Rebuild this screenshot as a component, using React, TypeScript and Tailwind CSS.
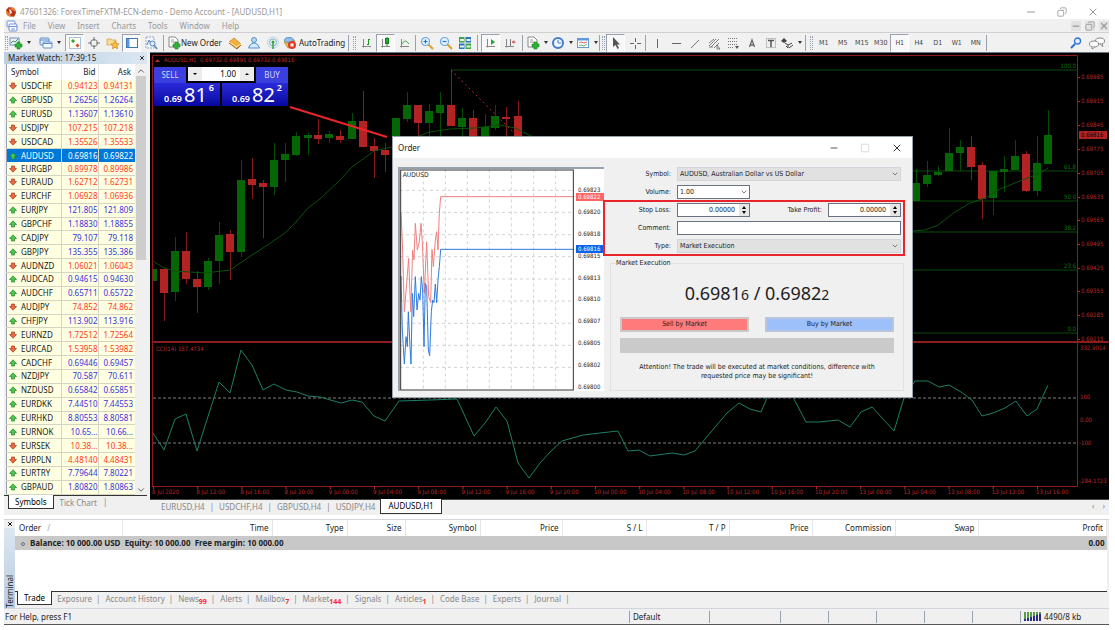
import { useState } from 'react'
import type { ReactNode } from 'react'
import { ChevronDown, ChevronUp, Copy, Minus, Square, X } from 'lucide-react'

type Quote = [symbol: string, bid: string, ask: string, up: boolean]

const quotes: Quote[] = [
    ['USDCHF', '0.94123', '0.94131', false],
    ['GBPUSD', '1.26256', '1.26264', true],
    ['EURUSD', '1.13607', '1.13610', true],
    ['USDJPY', '107.215', '107.218', false],
    ['USDCAD', '1.35526', '1.35533', false],
    ['AUDUSD', '0.69816', '0.69822', true],
    ['EURGBP', '0.89978', '0.89986', false],
    ['EURAUD', '1.62712', '1.62731', false],
    ['EURCHF', '1.06928', '1.06936', false],
    ['EURJPY', '121.805', '121.809', true],
    ['GBPCHF', '1.18830', '1.18855', true],
    ['CADJPY', '79.107', '79.118', true],
    ['GBPJPY', '135.355', '135.386', true],
    ['AUDNZD', '1.06021', '1.06043', false],
    ['AUDCAD', '0.94615', '0.94630', true],
    ['AUDCHF', '0.65711', '0.65722', true],
    ['AUDJPY', '74.852', '74.862', false],
    ['CHFJPY', '113.902', '113.916', true],
    ['EURNZD', '1.72512', '1.72564', false],
    ['EURCAD', '1.53958', '1.53982', false],
    ['CADCHF', '0.69446', '0.69457', true],
    ['NZDJPY', '70.587', '70.611', true],
    ['NZDUSD', '0.65842', '0.65851', true],
    ['EURDKK', '7.44510', '7.44553', true],
    ['EURHKD', '8.80553', '8.80581', true],
    ['EURNOK', '10.65...', '10.66...', true],
    ['EURSEK', '10.38...', '10.38...', false],
    ['EURPLN', '4.48140', '4.48431', false],
    ['EURTRY', '7.79644', '7.80221', true],
    ['GBPAUD', '1.80820', '1.80863', true],
]

// x, body top, body bottom, wick top, wick bottom, bullish
type Candle = [number, number, number, number, number, boolean]

const candles: Candle[] = [
    [153, 269, 281, 269, 281, true],
    [164, 269, 293, 269, 321, false],
    [175, 251, 292, 237, 301, true],
    [186, 251, 279, 232, 284, false],
    [197, 279, 287, 271, 313, false],
    [208, 261, 287, 258, 290, true],
    [219, 235, 261, 222, 284, true],
    [230, 234, 252, 230, 280, false],
    [241, 180, 252, 160, 257, true],
    [252, 179, 185, 158, 199, false],
    [263, 183, 187, 180, 238, false],
    [274, 160, 187, 143, 195, true],
    [285, 154, 160, 143, 182, true],
    [296, 136, 155, 132, 156, true],
    [308, 135, 138, 133, 155, true],
    [318, 135, 139, 119, 144, false],
    [329, 134, 138, 131, 143, true],
    [340, 136, 140, 130, 143, false],
    [352, 121, 139, 113, 139, true],
    [363, 121, 147, 91, 147, false],
    [374, 146, 151, 138, 178, false],
    [385, 150, 155, 143, 172, false],
    [396, 118, 140, 118, 140, true],
    [407, 105, 119, 92, 122, true],
    [418, 105, 123, 105, 140, false],
    [429, 111, 123, 104, 140, true],
    [440, 105, 113, 92, 140, true],
    [451, 105, 126, 70, 126, false],
    [462, 118, 127, 108, 140, true],
    [473, 118, 140, 110, 140, false],
    [485, 127, 140, 114, 140, true],
    [495, 116, 128, 105, 130, true],
    [506, 117, 119, 107, 140, false],
    [518, 116, 140, 101, 140, false],
    [916, 183, 201, 169, 201, true],
    [927, 175, 184, 161, 187, true],
    [938, 172, 175, 166, 176, true],
    [949, 153, 171, 128, 171, true],
    [960, 147, 153, 140, 171, true],
    [971, 147, 167, 136, 180, false],
    [982, 165, 199, 162, 219, false],
    [993, 171, 198, 171, 215, true],
    [1004, 169, 172, 156, 192, true],
    [1015, 156, 170, 140, 170, true],
    [1026, 154, 191, 151, 192, false],
    [1037, 163, 191, 136, 196, true],
    [1048, 135, 164, 110, 164, true],
]

const fibLevels: [string, number][] = [
    ['100.0', 70],
    ['61.8', 171],
    ['50.0', 201],
    ['38.2', 232],
    ['23.6', 270],
    ['0.0', 333],
]

const priceScale: [string, number][] = [
    ['0.69985', 77],
    ['0.69915', 101],
    ['0.69845', 125],
    ['0.69775', 149],
    ['0.69705', 173],
    ['0.69635', 197],
    ['0.69565', 220],
    ['0.69495', 244],
    ['0.69425', 268],
    ['0.69355', 291],
    ['0.69285', 315],
    ['0.69215', 339],
]

const dates = [
    '8 Jul 2020', '8 Jul 12:00', '8 Jul 16:00', '8 Jul 20:00', '9 Jul 00:00', '9 Jul 04:00', '9 Jul 08:00',
    '9 Jul 12:00', '9 Jul 16:00', '9 Jul 20:00', '10 Jul 00:00', '10 Jul 04:00', '10 Jul 08:00', '10 Jul 12:00',
    '10 Jul 16:00', '10 Jul 20:00', '13 Jul 00:00', '13 Jul 04:00', '13 Jul 08:00', '13 Jul 12:00', '13 Jul 16:00',
]

const cci =
    '153,433 164,450 175,419 186,414 197,451 219,382 230,393 241,350 252,365 263,390 274,384 286,390 297,392 308,396 320,397 341,403 352,400 362,402 374,416 385,421 399,401 430,400 457,399 474,436 485,423 496,407 507,421 518,463 529,478 540,463 551,451 562,441 583,435 600,433 618,431 628,451 639,450 650,456 672,453 684,455 695,451 727,413 739,403 750,409 761,412 767,398 772,380 789,380 794,399 806,422 819,422 838,420 850,427 861,412 872,407 894,431 904,398 915,381 928,381 939,387 949,385 961,392 972,400 982,416 993,413 1005,408 1016,401 1027,416 1037,409 1048,385'

const movingAverage =
    '153,261 164,268 175,271 205,273 230,270 252,255 263,248 285,233 296,222 308,208 320,199 340,180 352,167 374,151 391,147 416,137 430,132 450,129 475,128 500,125 515,128 533,137 700,240 870,234 913,231 925,230 938,225 955,212 970,203 985,198 1000,189 1020,181 1040,173 1048,168'

const menus = ['File', 'View', 'Insert', 'Charts', 'Tools', 'Window', 'Help']
const timeframes = ['M1', 'M5', 'M15', 'M30', 'H1', 'H4', 'D1', 'W1', 'MN']
const chartTabs = ['EURUSD,H4', 'USDCHF,H4', 'GBPUSD,H4', 'USDJPY,H4', 'AUDUSD,H1']
const tickScale = ['0.69823', '0.69820', '0.69818', '0.69815', '0.69813', '0.69810', '0.69807', '0.69805', '0.69802', '0.69800']

const terminalTabs: [string, string?][] = [
    ['Trade'],
    ['Exposure'],
    ['Account History'],
    ['News', '99'],
    ['Alerts'],
    ['Mailbox', '7'],
    ['Market', '144'],
    ['Signals'],
    ['Articles', '1'],
    ['Code Base'],
    ['Experts'],
    ['Journal'],
]

/* ---------- toolbar ---------- */

function Glyph({ children }: { children: ReactNode }) {
    return (
        <svg viewBox="0 0 14 14" className="h-3.5 w-3.5 shrink-0" fill="none" strokeWidth="1">
            {children}
        </svg>
    )
}

const plus = <path d="M8 6h3v2h2v3h-2v2H8v-2H6V8h2z" fill="#2eb135" stroke="#17861f" strokeWidth=".6" />
const axes = <path d="M3.5 3v8.500M2 10.500h9" stroke="#888" />

const icons = {
    newChart: (
        <>
            <rect x="1" y="2" width="9" height="7" fill="#eaf4ff" stroke="#7390b5" />
            <path d="M2 7l2-2 2 1 3-3" stroke="#3c9c43" />
            {plus}
        </>
    ),
    profiles: (
        <>
            <rect x="1" y="2" width="9" height="7" rx="1" fill="#dbeafb" stroke="#5f8fc7" />
            <path d="M1 4h9" stroke="#5f8fc7" />
            <rect x="4" y="6" width="9" height="6" rx="1" fill="#f5faff" stroke="#5f8fc7" />
            <path d="M4 7.500h9" stroke="#5f8fc7" />
        </>
    ),
    watch: (
        <>
            <rect x="1.500" y="1.500" width="11" height="11" fill="#fffdf2" stroke="#a9c1e0" />
            <path d="M5 3l2 2-2 2-2-2z" fill="#2ba135" />
            <path d="M9.500 7.500l2 2-2 2-2-2z" fill="#d8492b" />
        </>
    ),
    target: (
        <>
            <circle cx="7" cy="7" r="3.500" stroke="#777" />
            <path d="M7 1v4M7 9v4M1 7h4M9 7h4" stroke="#777" />
        </>
    ),
    navigator: (
        <>
            <path d="M1 3h4l1 1h4v5H1z" fill="#f9dd94" stroke="#d3a552" strokeWidth=".8" />
            <path d="M9 5l1.200 2.600 2.800.3-2 2 .5 2.800L9 11.300l-2.500 1.400.5-2.800-2-2 2.800-.3z" fill="#fbbf3d" stroke="#c97f19" strokeWidth=".7" />
        </>
    ),
    panel: (
        <>
            <rect x="1.500" y="2.500" width="11" height="9" fill="#fff" stroke="#3f78b8" />
            <rect x="2" y="3" width="2.500" height="8" fill="#5b9ade" />
        </>
    ),
    tester: (
        <>
            <rect x="2" y="1" width="8" height="11" fill="#f3f8ff" stroke="#91a9c6" strokeDasharray="2 1" />
            <path d="M3 9l2-5 2 4 1-2" stroke="#557fb0" />
            <circle cx="8.500" cy="7.500" r="2.500" fill="#dcecff" stroke="#5b83b5" />
            <path d="M10 9l3 4" stroke="#5b83b5" strokeWidth="1.500" />
        </>
    ),
    order: (
        <>
            <path d="M2 1h6l3 3v7H2z" fill="#fff" stroke="#888" />
            <path d="M4 4h3M4 6h4" stroke="#999" />
            {plus}
        </>
    ),
    editor: (
        <>
            <path d="M1 6l5-4 7 6-4 4z" fill="#f3b13c" stroke="#c98528" strokeWidth=".8" />
            <path d="M1 6l7.500 5L13 8" stroke="#fff0b8" />
            <path d="M1 7l8 6 4-4" stroke="#a8641a" />
        </>
    ),
    account: (
        <>
            <circle cx="7" cy="4" r="2.500" fill="#b9daf7" stroke="#4f8fce" />
            <path d="M3 9q4-4 8 0l1.500 3h-11z" fill="#d5e9fb" stroke="#4f8fce" />
        </>
    ),
    signal: (
        <>
            <circle cx="7" cy="6.500" r="5.500" stroke="#b8d3e3" />
            <circle cx="7" cy="6.500" r="3.500" stroke="#7fb1cc" />
            <circle cx="7" cy="6" r="1.500" fill="#31a33d" />
            <path d="M7 7v6" stroke="#31a33d" strokeWidth="1.500" />
        </>
    ),
    auto: (
        <>
            <path d="M1 6l5-4 6 3-2 6-5 1z" fill="#f2b94b" stroke="#b98629" strokeWidth=".8" />
            <ellipse cx="6" cy="4" rx="4.500" ry="2.500" fill="#8fc0ea" stroke="#4a86ba" strokeWidth=".8" />
            <circle cx="9" cy="9" r="4" fill="#dc3a26" />
            <rect x="7.500" y="7.500" width="3" height="3" fill="#fff" />
        </>
    ),
    bars: (
        <>
            {axes}
            <path d="M8.500 3v6M7 8.500h1.500M10 3.500H8.500" stroke="#1e9428" />
        </>
    ),
    candle: (
        <>
            {axes}
            <path d="M8 1v9" stroke="#14811e" />
            <rect x="6.500" y="2.500" width="3" height="5" fill="#25a832" stroke="#14811e" />
        </>
    ),
    line: (
        <>
            {axes}
            <path d="M4 8q3-6 7 0" stroke="#4aa953" />
        </>
    ),
    zoomIn: (
        <>
            <path d="M8 8l5 5" stroke="#dfa32d" strokeWidth="2.200" />
            <circle cx="5.500" cy="5.500" r="4" fill="#e8f4ff" stroke="#6aa6e0" strokeWidth="1.200" />
            <path d="M3.500 5.500h4M5.500 3.500v4" stroke="#2375c9" strokeWidth="1.200" />
        </>
    ),
    zoomOut: (
        <>
            <path d="M8 8l5 5" stroke="#dfa32d" strokeWidth="2.200" />
            <circle cx="5.500" cy="5.500" r="4" fill="#e8f4ff" stroke="#6aa6e0" strokeWidth="1.200" />
            <path d="M3.500 5.500h4" stroke="#2375c9" strokeWidth="1.200" />
        </>
    ),
    tile: (
        <>
            <rect x="1" y="1" width="5.500" height="5.500" fill="#3aa544" />
            <rect x="7.500" y="1" width="5.500" height="5.500" fill="#2f72c4" />
            <rect x="1" y="7.500" width="5.500" height="5.500" fill="#2f72c4" />
            <rect x="7.500" y="7.500" width="5.500" height="5.500" fill="#3aa544" />
            <path d="M2 4h4M8.500 4h4M2 10.500h4M8.500 10.500h4" stroke="#e2f3e4" strokeWidth="2" />
        </>
    ),
    scroll: (
        <>
            {axes}
            <path d="M7 3v6l4-3z" fill="#27a332" />
        </>
    ),
    shift: (
        <>
            {axes}
            <path d="M7.500 3v7" stroke="#777" />
            <path d="M12.500 6H9.500M11 4.500L9.500 6 11 7.500" stroke="#cc3524" />
        </>
    ),
    clock: (
        <>
            <circle cx="7" cy="7" r="5" fill="#f1f7ff" stroke="#3f7ccc" strokeWidth="2" />
            <path d="M7 4v3h3" stroke="#3f7ccc" />
        </>
    ),
    template: (
        <>
            <rect x="1.500" y="2.500" width="11" height="9" fill="#fff" stroke="#6d97c6" />
            <path d="M1 3.500h12" stroke="#5b9ade" strokeWidth="2" />
            <path d="M3 7l2-1 3 1 3-1" stroke="#c44" strokeWidth=".8" />
            <path d="M3 10l2-1 3 1 3-2" stroke="#3a9a44" strokeWidth=".8" />
        </>
    ),
    cursor: <path d="M4 1v10l2.500-2 2 4 1.500-1-2-3.500H11z" fill="#555" />,
    cross: <path d="M7.500 2v4M7.500 9v4M2 7.500h4M9 7.500h4" stroke="#666" />,
    vline: <path d="M7.500 3v9" stroke="#666" />,
    hline: <path d="M3 7.500h9" stroke="#666" />,
    trend: <path d="M3 12l8-8" stroke="#777" />,
    channel: <path d="M2 10l7-7M4 11l8-8M2 7l5-4M7 12l5-5M2 11h4M10 9l3 4h-3z" stroke="#666" strokeWidth=".8" />,
    fibo: (
        <>
            <path d="M2 2.500h10M2 5.500h10M2 8.500h10M2 11.500h6" stroke="#777" strokeDasharray="1 1" />
            <path d="M9 10h4l-2 3z" fill="#555" />
        </>
    ),
    text: <path d="M4.500 11L7 4l2.500 7M5.500 9h3" stroke="#666" strokeWidth="1.300" />,
    label: (
        <>
            <rect x="2.500" y="2.500" width="9" height="9" stroke="#888" strokeDasharray="1 1" />
            <path d="M4 4.500h6M7 4.500V11" stroke="#555" strokeWidth="1.500" />
        </>
    ),
    arrows: (
        <>
            <path d="M1 5l3-3 3 3-3 2z" fill="#444" />
            <path d="M5 7l3 2 4-2M8 9v3l-2-2M9 12l4-3" stroke="#444" />
        </>
    ),
}

type IconName = keyof typeof icons

function Tool({ icon, label, pressed, menu, children }: { icon: IconName; label: string; pressed?: boolean; menu?: boolean; children?: ReactNode }) {
    return (
        <button
            type="button"
            title={label}
            aria-label={label}
            className={`flex h-[18px] min-w-[19px] items-center justify-center text-[#222] ${
                pressed ? 'border border-r-white border-b-white border-l-gray-400 border-t-gray-400 bg-[#f8f8f8]' : ''
            }`}
        >
            <Glyph>{icons[icon]}</Glyph>
            {children}
            {menu && <span className="ml-1 border-x-2 border-t-3 border-x-transparent border-t-[#333]" />}
        </button>
    )
}

function Grip() {
    return <span className="mx-px h-3.5 w-[3px] border-x border-dotted border-gray-400" />
}

function Sep({ tight }: { tight?: boolean }) {
    return <span className={`h-4 w-px bg-gray-400 ${tight ? 'mx-px' : 'mx-[3px]'}`} />
}

function Toolbar() {
    const [frame, setFrame] = useState('H1')

    return (
        <div className="flex h-5 items-center overflow-hidden border-t border-[#d0d0d0] bg-[#f1f1f1]">
            <Grip />
            <div className="flex items-center gap-2 pr-1">
                <Tool icon="newChart" label="New chart" menu />
                <Tool icon="profiles" label="Profiles" menu />
            </div>
            <Tool icon="watch" label="Market Watch" pressed />
            <Tool icon="target" label="Data Window" />
            <Tool icon="navigator" label="Navigator" />
            <Tool icon="panel" label="Terminal" pressed />
            <Tool icon="tester" label="Strategy Tester" />
            <Sep />
            <Tool icon="order" label="New order">
                New Order
            </Tool>
            <div className="flex items-center pl-1">
                <Tool icon="editor" label="MetaEditor" />
                <Tool icon="account" label="Account" />
                <Tool icon="signal" label="Signals" />
                <Tool icon="auto" label="Auto trading">
                    <span className="pl-0.5">AutoTrading</span>
                </Tool>
            </div>
            <Sep />
            <Grip />
            <Tool icon="bars" label="Bar chart" />
            <Tool icon="candle" label="Candlesticks" pressed />
            <Tool icon="line" label="Line chart" />
            <Sep tight />
            <Tool icon="zoomIn" label="Zoom in" />
            <Tool icon="zoomOut" label="Zoom out" />
            <Tool icon="tile" label="Tile windows" />
            <Sep />
            <Tool icon="scroll" label="Auto scroll" pressed />
            <Tool icon="shift" label="Chart shift" />
            <Sep />
            <div className="flex items-center gap-[3px]">
                <Tool icon="order" label="Indicators" menu />
                <Tool icon="clock" label="Periods" menu />
                <Tool icon="template" label="Templates" menu />
            </div>
            <Sep tight />
            <Grip />
            <Tool icon="cursor" label="Cursor" pressed />
            <Tool icon="cross" label="Crosshair" />
            <Sep tight />
            <Tool icon="vline" label="Vertical line" />
            <Tool icon="hline" label="Horizontal line" />
            <Tool icon="trend" label="Trendline" />
            <Tool icon="channel" label="Channel" />
            <Tool icon="fibo" label="Fibonacci" />
            <Tool icon="text" label="Text" />
            <Tool icon="label" label="Text label" />
            <Tool icon="arrows" label="Arrows" menu />
            <Sep />
            <Grip />
            {timeframes.map((t) => (
                <button
                    key={t}
                    type="button"
                    onClick={() => setFrame(t)}
                    className={`h-[18px] w-[19px] font-['DejaVu_Sans_Condensed','DejaVu_Sans',sans-serif] text-[7px] text-[#444] ${
                        t === frame ? 'border border-r-white border-b-white border-l-gray-400 border-t-gray-400 bg-[#f8f8f8]' : ''
                    }`}
                >
                    {t}
                </button>
            ))}
            <Sep tight />
            <div className="ml-auto flex items-center gap-1.5 pr-1">
                <button type="button" aria-label="Search">
                    <Glyph>
                        <circle cx="8.500" cy="5" r="3" fill="#e3f0ff" stroke="#2c6fd0" strokeWidth="1.300" />
                        <path d="M6 8l-4 4" stroke="#2c6fd0" strokeWidth="2" />
                    </Glyph>
                </button>
                <button type="button" aria-label="Chat">
                    <svg viewBox="0 0 16 14" className="h-3.5 w-4" fill="#fff" stroke="#888">
                        <ellipse cx="11" cy="5" rx="4.500" ry="3" />
                        <path d="M13 7.500l1 3-3-2.500" />
                        <ellipse cx="5" cy="8" rx="4.500" ry="3" />
                        <path d="M3 10.500l0 2.500 3-2" />
                    </svg>
                </button>
            </div>
        </div>
    )
}

/* ---------- market watch ---------- */

function MarketWatch() {
    return (
        <aside className="flex w-[143px] shrink-0 flex-col bg-[#f0f0f0]">
            <div className="flex h-3 items-center justify-between bg-linear-to-r from-[#bccfe2] to-[#dbe6f1] pr-0.5 pl-1 text-[#222]">
                <span>Market Watch: 17:39:15</span>
                <button type="button" aria-label="Close">
                    <X className="h-1.5 w-1.5" strokeWidth={4} />
                </button>
            </div>
            <div className="ml-0.5 flex flex-1">
                <table className="h-[431px] flex-1 table-fixed border-collapse border-l border-gray-400 bg-[#ffffe1]">
                    <colgroup>
                        <col />
                        <col className="w-[37px]" />
                        <col className="w-[37px]" />
                    </colgroup>
                    <thead>
                        <tr className="h-4 bg-white text-[#222]">
                            <th className="border-r border-gray-200 pl-1 text-left font-normal">Symbol</th>
                            <th className="border-r border-gray-200 pr-0.5 text-right font-normal">Bid</th>
                            <th className="pr-1 text-right font-normal">Ask</th>
                        </tr>
                    </thead>
                    <tbody>
                        {quotes.map(([symbol, bid, ask, up]) => {
                            const selected = symbol === 'AUDUSD'
                            const tone = selected ? 'text-white' : up ? 'text-[#3a32dc]' : 'text-[#ff3b21]'
                            return (
                                <tr key={symbol} className={selected ? 'bg-[#0078d7]' : 'border-b border-[#d5d5c4]'}>
                                    <td className={`border-r border-[#d5d5c4] p-0 ${selected ? 'text-white' : 'text-[#222]'}`}>
                                        <div className="flex items-center gap-1 pl-0.5">
                                            <svg viewBox="0 0 8 8" className="h-2 w-2">
                                                {up ? (
                                                    <path d="M4 .8L7.500 4.500H5.500V7h-3V4.500H.5z" fill="#4cc552" stroke="#23852a" strokeWidth=".7" />
                                                ) : (
                                                    <path d="M4 7.200L7.500 3.500H5.500V1h-3v2.500H.5z" fill="#ea6a45" stroke="#a5391f" strokeWidth=".7" />
                                                )}
                                            </svg>
                                            {symbol}
                                        </div>
                                    </td>
                                    <td className={`border-r border-[#d5d5c4] p-0 text-right ${tone}`}>{bid}</td>
                                    <td className={`p-0 pr-0.5 text-right ${tone}`}>{ask}</td>
                                </tr>
                            )
                        })}
                    </tbody>
                </table>
                <div className="flex w-3 flex-col items-center justify-between bg-[#f0f0f0]">
                    <ChevronUp className="mt-0.5 h-2.5 w-2.5 text-[#444]" />
                    <div className="mb-auto h-[184px] w-2.5 bg-[#cdcdcd]" />
                    <ChevronDown className="h-2.5 w-2.5 text-[#444]" />
                </div>
            </div>
            <div className="flex h-5 items-start border-t border-[#333] pl-1 text-[#888]">
                <button type="button" className="-mt-px h-3.5 border border-t-0 border-[#333] bg-white px-1.5 text-black">
                    Symbols
                </button>
                <button type="button" className="h-3.5 px-1.5">
                    Tick Chart
                </button>
                <span>|</span>
            </div>
        </aside>
    )
}

/* ---------- chart ---------- */

function PriceChart() {
    return (
        <svg viewBox="150 53 959 446" className="block w-full bg-black font-['DejaVu_Sans_Condensed','DejaVu_Sans',sans-serif] text-[6px]">
            <defs>
                <clipPath id="plot">
                    <rect x="153" y="55" width="925" height="431" />
                </clipPath>
            </defs>

            <g stroke="#0b4a0b">
                {fibLevels.map(([label, y]) => (
                    <line key={label} x1="451" x2="1077" y1={y} y2={y} />
                ))}
            </g>
            <polyline points="451,70 518,137 560,180" fill="none" stroke="#b42a2a" strokeDasharray="2 3" />

            <g clipPath="url(#plot)">
                {candles.map(([x, top, bottom, high, low, bull]) => (
                    <g key={x} fill={bull ? '#046604' : '#b42323'}>
                        <rect x={x} y={high} width="1" height={low - high} opacity=".75" />
                        <rect x={x - 4} y={top} width="8" height={bottom - top} />
                    </g>
                ))}
            </g>
            <polyline points={movingAverage} fill="none" stroke="#0b520b" />

            <g stroke="#7e7e7e" strokeDasharray="3 2">
                <line x1="153" x2="1077" y1="398" y2="398" />
                <line x1="153" x2="1077" y1="443" y2="443" />
            </g>
            <polyline points={cci} fill="none" stroke="#1d7f68" />

            <g stroke="#8e1c1c">
                <path d="M152.500 486V55.500H1077.500V486.500H152" fill="none" />
                <path d="M152 342h957" strokeWidth="2" />
            </g>

            <g fill="#0d780d" textAnchor="end">
                {fibLevels.map(([label, y]) => (
                    <text key={label} x="1076" y={y - 2}>
                        {label}
                    </text>
                ))}
            </g>
            <g fill="#bb2828">
                {priceScale.map(([label, y]) => (
                    <g key={label}>
                        <rect x="1078" y={y} width="2" height="1" />
                        <text x="1081" y={y + 2}>
                            {label}
                        </text>
                    </g>
                ))}
                <rect x="1079" y="131" width="28" height="8" fill="#b42323" />
                <text x="1081" y="137" fill="#000">
                    0.69816
                </text>
                <text x="1080" y="350">332.9014</text>
                <text x="1080" y="399">100</text>
                <text x="1080" y="422">0.00</text>
                <text x="1079" y="445">-100</text>
                <text x="1079" y="483">-284.1723</text>
                <text x="156" y="351">CCI(14) 157.4734</text>
                <path d="M155 62h5l-2.500-3z" />
                <text x="164" y="62">AUDUSD,H1&nbsp; 0.69732 0.69891 0.69732 0.69816</text>
                {dates.map((d, i) => (
                    <g key={d}>
                        <rect x={153 + i * 44.2} y="486" width="1" height="3" />
                        <text x={152 + i * 44.2} y="494">
                            {d}
                        </text>
                    </g>
                ))}
            </g>

            <line x1="290" y1="107" x2="387" y2="137" stroke="#e8252b" strokeWidth="2" />
        </svg>
    )
}

function OneClick() {
    return (
        <div className="absolute top-3.5 left-1 w-[134px] text-white">
            <div className="flex h-4 items-stretch">
                <span className="w-8 bg-[#3a3fe0] text-center leading-4 text-[#d4d6ff]">SELL</span>
                <div className="mx-0.5 mb-0.5 flex flex-1 items-stretch bg-white text-black">
                    <button type="button" aria-label="Less" className="flex w-3.5 items-center justify-center bg-[#ececec]">
                        <span className="border-x-2 border-t-2 border-x-transparent border-t-black" />
                    </button>
                    <input aria-label="Lots" defaultValue="1.00" className="w-0 flex-1 pr-1 text-right outline-none" />
                    <button type="button" aria-label="More" className="flex w-3.5 items-center justify-center bg-[#ececec]">
                        <span className="border-x-2 border-b-2 border-x-transparent border-b-black" />
                    </button>
                </div>
                <span className="w-8 bg-[#3a3fe0] text-center leading-4 text-[#d4d6ff]">BUY</span>
            </div>
            <div className="flex gap-0.5">
                {[
                    ['81', '6'],
                    ['82', '2'],
                ].map(([big, small]) => (
                    <button
                        key={big}
                        type="button"
                        className="flex h-[23px] flex-1 items-end justify-center gap-0.5 bg-linear-to-b from-[#2a2ad8] to-[#0606a0] pb-0.5 pl-1"
                    >
                        <span className="text-[9px] leading-[10px] font-semibold">0.69</span>
                        <span className="text-[20px] leading-[19px]">{big}</span>
                        <span className="self-start text-[9px] leading-[9px] font-semibold">{small}</span>
                    </button>
                ))}
            </div>
        </div>
    )
}

/* ---------- order dialog ---------- */

function TickChart() {
    return (
        <div className="flex h-[224px] w-[206px] shrink-0 border-t-2 border-l-2 border-gray-400 bg-white">
            <svg viewBox="30 328 522 664" className="h-[222px] w-[174px] shrink-0" fill="none" strokeWidth="3">
                <g stroke="#d2d2d2" strokeDasharray="9 9">
                    {[100, 166, 232, 298, 364, 431, 497].map((x) => (
                        <line key={x} x1={x} x2={x} y1="328" y2="992" />
                    ))}
                    {[391, 457, 524, 590, 657, 723, 790, 856, 922].map((y) => (
                        <line key={y} x1="30" x2="552" y1={y} y2={y} />
                    ))}
                </g>
                <polyline
                    stroke="#f08080"
                    points="33,460 37,545 43,755 50,670 56,595 62,755 68,570 72,600 76,490 82,570 88,545 93,490 97,545 103,700 110,545 116,710 122,728 126,568 130,620 136,540 140,515 144,570 148,460 152,410 550,410"
                />
                <polyline
                    stroke="#2f7be0"
                    points="33,648 37,810 43,912 48,830 52,860 55,755 60,860 63,912 67,700 71,770 76,650 81,750 86,700 90,720 94,650 98,690 102,860 106,670 110,680 115,870 119,887 124,755 128,720 132,728 136,672 140,728 144,660 148,620 152,568 550,568"
                />
                <rect x="32" y="330" width="518" height="660" stroke="#333" />
                <text x="38" y="351" fill="#222" fontSize="20" stroke="none">
                    AUDUSD
                </text>
            </svg>
            <div className="relative flex flex-1 flex-col justify-between pt-[17px] pl-1 text-[#222]">
                {tickScale.map((t) => (
                    <span key={t} className="text-[6px] leading-2">
                        {t}
                    </span>
                ))}
                <span className="absolute top-6 left-0.5 w-7 bg-[#ff6464] pl-0.5 text-[6px] leading-2 text-white">0.69822</span>
                <span className="absolute top-[76px] left-0.5 w-7 bg-[#0a62e8] pl-0.5 text-[6px] leading-2 text-white">0.69816</span>
            </div>
        </div>
    )
}

function Picker({ id, value, white }: { id: string; value: string; white?: boolean }) {
    return (
        <div className="relative w-full">
            <select id={id} className={`h-3.5 w-full appearance-none border pl-0.5 ${white ? 'border-gray-500 bg-white' : 'border-gray-300 bg-[#e1e1e1]'}`}>
                <option>{value}</option>
            </select>
            <ChevronDown className="pointer-events-none absolute top-[3px] right-0.5 h-2 w-2 text-[#444]" />
        </div>
    )
}

function Spinner({ id }: { id: string }) {
    return (
        <div className="flex h-3.5 w-[73px] border border-gray-500 bg-white">
            <input id={id} defaultValue="0.00000" className="w-0 flex-1 pr-1 text-right outline-none" />
            <div className="flex w-2.5 flex-col items-center justify-center gap-0.5 bg-[#e6e6e6]">
                <span className="border-x-2 border-b-3 border-x-transparent border-b-black" />
                <span className="border-x-2 border-t-3 border-x-transparent border-t-black" />
            </div>
        </div>
    )
}

function OrderDialog() {
    return (
        <section
            role="dialog"
            aria-labelledby="order-title"
            className="absolute top-[83px] left-[242px] w-[521px] border border-gray-400 bg-[#f0f0f0] pb-1.5 font-['DejaVu_Sans_Condensed','DejaVu_Sans',sans-serif] text-[7px] text-[#222]"
        >
            <header className="flex h-[21px] items-center bg-white px-[5px] font-['Noto_Sans',sans-serif] text-[8px]">
                <h2 id="order-title" className="flex-1">
                    Order
                </h2>
                <div className="flex gap-[21px] pr-1 text-[#333]">
                    <button type="button" aria-label="Minimize">
                        <Minus className="h-2.5 w-2.5" />
                    </button>
                    <button type="button" aria-label="Maximize" disabled>
                        <Square className="h-2.5 w-2.5 text-gray-300" />
                    </button>
                    <button type="button" aria-label="Close">
                        <X className="h-3 w-3" />
                    </button>
                </div>
            </header>

            <div className="flex pt-[9px] pr-2 pl-[5px]">
                <TickChart />
                <form className="flex flex-1 flex-col">
                    <div className="grid grid-cols-[67px_1fr] items-center gap-x-1.5 gap-y-1 pr-[3px]">
                        <label htmlFor="symbol" className="text-right">
                            Symbol:
                        </label>
                        <Picker id="symbol" value="AUDUSD, Australian Dollar vs US Dollar" />
                        <label htmlFor="volume" className="text-right">
                            Volume:
                        </label>
                        <div className="w-[73px]">
                            <Picker id="volume" value="1.00" white />
                        </div>
                    </div>

                    <div className="relative mt-1 grid grid-cols-[67px_1fr] items-center gap-x-1.5 gap-y-1 pr-[3px]">
                        <label htmlFor="sl" className="text-right">
                            Stop Loss:
                        </label>
                        <div className="flex items-center justify-between">
                            <Spinner id="sl" />
                            <label htmlFor="tp" className="ml-auto pr-1.5">
                                Take Profit:
                            </label>
                            <Spinner id="tp" />
                        </div>
                        <label htmlFor="comment" className="text-right">
                            Comment:
                        </label>
                        <input id="comment" className="h-3.5 w-full border border-gray-500 bg-white px-1 outline-none" />
                        <label htmlFor="type" className="text-right">
                            Type:
                        </label>
                        <Picker id="type" value="Market Execution" />
                        <div className="pointer-events-none absolute -inset-x-px -inset-y-[3px] border-2 border-[#e8252b]" />
                    </div>

                    <fieldset className="mt-1.5 ml-1.5 flex-1 border border-[#e2e2e2] px-[9px]">
                        <legend className="-ml-1 leading-[9px]">Market Execution</legend>
                        <p className="pt-[13px] text-center font-['Noto_Sans',sans-serif] text-[18px] leading-6">
                            0.6981<span className="text-[14px]">6</span> / 0.6982<span className="text-[14px]">2</span>
                        </p>
                        <div className="mt-2.5 grid grid-cols-2 gap-4">
                            <button type="button" className="h-[15px] border-2 border-[#c9c9c9] bg-[#ff7b7b] leading-[11px]">
                                Sell by Market
                            </button>
                            <button type="button" className="h-[15px] border-2 border-[#b8c6dc] bg-[#9dc0fb] leading-[11px]">
                                Buy by Market
                            </button>
                        </div>
                        <div className="mt-1.5 h-[15px] bg-[#cacaca]" />
                        <p className="mt-2.5 px-4 text-center leading-[9px]">
                            Attention! The trade will be executed at market conditions, difference with requested price may be significant!
                        </p>
                    </fieldset>
                </form>
            </div>
        </section>
    )
}

/* ---------- terminal ---------- */

function Terminal() {
    return (
        <section className="mt-1 flex h-[89px] border-t border-gray-300 bg-[#f0f0f0]">
            <div className="flex w-[11px] flex-col items-center bg-linear-to-b from-[#dfe9f3] to-[#b8cce0]">
                <button type="button" aria-label="Close terminal" className="flex h-2 w-full items-center justify-center bg-[#f0f0f0]">
                    <X className="h-1.5 w-1.5" strokeWidth={4} />
                </button>
                <span className="mt-auto rotate-180 leading-[10px] text-[#222] [writing-mode:vertical-rl]">Terminal</span>
            </div>
            <div className="flex min-w-0 flex-1 flex-col pr-0.5">
                <div className="flex-1 bg-white">
                    <table className="w-full table-fixed border-collapse text-right text-[#222]">
                        <colgroup>
                            <col className="w-[107px]" />
                            <col className="w-[150px]" />
                            <col className="w-[75px]" />
                            <col className="w-[58px]" />
                            <col className="w-[75px]" />
                            <col className="w-[82px]" />
                            <col className="w-[84px]" />
                            <col className="w-[83px]" />
                            <col className="w-[83px]" />
                            <col className="w-[83px]" />
                            <col className="w-[83px]" />
                            <col />
                        </colgroup>
                        <thead>
                            <tr className="h-4">
                                <th className="border-r border-gray-200 pl-1 text-left font-normal">
                                    Order <span className="pl-1 text-gray-400">/</span>
                                </th>
                                {['Time', 'Type', 'Size', 'Symbol', 'Price', 'S / L', 'T / P', 'Price', 'Commission', 'Swap', 'Profit'].map((c, i) => (
                                    <th key={i} className="border-r border-gray-200 pr-[3px] font-normal">
                                        {c}
                                    </th>
                                ))}
                            </tr>
                        </thead>
                        <tbody>
                            <tr className="h-3.5 bg-[#c8c8c8] font-bold">
                                <td colSpan={11} className="pl-1.5 text-left">
                                    <span className="mr-[5px] inline-block h-1 w-1 rounded-full border border-gray-500" />
                                    Balance: 10 000.00 USD&nbsp; Equity: 10 000.00&nbsp; Free margin: 10 000.00
                                </td>
                                <td className="pr-0.5">0.00</td>
                            </tr>
                        </tbody>
                    </table>
                </div>
                <nav className="flex h-[17px] items-start border-t border-[#333] pl-0.5 text-[#888]">
                    {terminalTabs.map(([name, count], i) =>
                        i === 0 ? (
                            <button key={name} type="button" className="-mt-px h-3.5 border border-t-0 border-[#333] bg-white px-1.5 text-black">
                                {name}
                            </button>
                        ) : (
                            <button key={name} type="button" className="flex h-3.5 items-center pl-[5px]">
                                {name}
                                {count && <sub className="bottom-0 self-end text-[7px] leading-2 font-bold text-[#ff2a2a]">{count}</sub>}
                                <span className="pl-1">|</span>
                            </button>
                        ),
                    )}
                </nav>
            </div>
        </section>
    )
}

function StatusBar() {
    return (
        <footer className="flex h-[17px] items-center border-t border-b border-t-gray-300 border-b-[#555] bg-[#f0f0f0] text-[#222]">
            <span className="flex-1 pl-px">For Help, press F1</span>
            <span className="w-20 border-l border-gray-400 pl-[3px]">Default</span>
            <span className="h-3 w-[71px] border-l border-gray-400" />
            <span className="h-3 w-12 border-l border-gray-400" />
            <span className="h-3 w-12 border-l border-gray-400" />
            <span className="h-3 w-12 border-l border-gray-400" />
            <span className="h-3 w-12 border-l border-gray-400" />
            <span className="h-3 w-12 border-l border-gray-400" />
            <span className="flex w-[89px] items-center gap-[3px] border-l border-gray-400 pl-[3px]">
                <svg viewBox="0 0 17 9" className="h-[9px] w-[17px]">
                    {[0, 3, 6, 9, 12, 15].map((x, i) => (
                        <g key={x}>
                            <rect x={x} y="0" width="2" height={7 - i} fill="#5a9a4a" />
                            <rect x={x} y={7 - i} width="2" height={2 + i} fill="#2a2a8a" />
                        </g>
                    ))}
                </svg>
                4490/8 kb
            </span>
        </footer>
    )
}

export default function App() {
    return (
        <div className="flex min-h-screen flex-col bg-white pt-1 pr-1.5 pb-[5px] pl-1 font-['Noto_Sans',sans-serif] text-[8px] leading-3">
            <header className="flex h-[15px] items-center text-[#999]">
                <svg viewBox="0 0 12 12" className="mx-px h-3 w-3">
                    <circle cx="6" cy="6" r="5" fill="#e9793c" />
                    <path d="M1 4l3-3 3 3-3 3zM7 4l4 2-2 5-4-2z" fill="#b5321c" />
                    <path d="M4 3l2 1 1 3-2 1z" fill="#ffe6c9" />
                </svg>
                <h1 className="flex-1 pl-0.5">47601326: ForexTimeFXTM-ECN-demo - Demo Account - [AUDUSD,H1]</h1>
                <div className="flex gap-5 pr-2.5">
                    <button type="button" aria-label="Minimize">
                        <Minus className="h-3 w-3" />
                    </button>
                    <button type="button" aria-label="Restore">
                        <Copy className="h-2.5 w-2.5 -scale-x-100" strokeWidth={2} />
                    </button>
                    <button type="button" aria-label="Close">
                        <X className="h-3 w-3" />
                    </button>
                </div>
            </header>

            <nav className="flex h-[13px] items-center bg-[#f0f0f0] text-[#999]">
                <svg viewBox="0 0 12 12" className="mx-0.5 h-3 w-3" fill="#fff" stroke="#6e8fd6">
                    <rect x="1" y="1" width="8" height="6" rx="1" />
                    <rect x="3" y="4" width="8" height="7" rx="1" />
                    <path d="M3 6.500h8M5 9h4" />
                </svg>
                <div className="flex flex-1 gap-3 pl-[3px]">
                    {menus.map((m) => (
                        <button key={m} type="button">
                            {m}
                        </button>
                    ))}
                </div>
                <div className="flex gap-1">
                    <Minus className="h-2.5 w-2.5 bg-[#e2e2e2]" strokeWidth={3} />
                    <Copy className="h-2.5 w-2.5 -scale-x-100 bg-[#e2e2e2]" />
                    <X className="h-2.5 w-2.5 bg-[#e2e2e2]" strokeWidth={3} />
                </div>
            </nav>

            <Toolbar />

            <main className="flex flex-1 bg-[#f0f0f0]">
                <MarketWatch />
                <div className="ml-[3px] flex min-w-0 flex-1 flex-col border-t border-gray-500">
                    <div className="relative">
                        <PriceChart />
                        <OneClick />
                        <OrderDialog />
                    </div>
                    <nav className="flex h-4 items-start border-t border-[#444] pl-1.5 text-[#888]">
                        {chartTabs.map((tab, i) =>
                            i === chartTabs.length - 1 ? (
                                <button key={tab} type="button" className="-mt-px h-[15px] border border-t-0 border-[#333] bg-white px-[7px] text-black">
                                    {tab}
                                </button>
                            ) : (
                                <button key={tab} type="button" className="h-3.5 pl-[5px]">
                                    {tab}
                                    <span className="pl-[5px]">{i < 3 && '|'}</span>
                                </button>
                            ),
                        )}
                        <span className="ml-auto flex gap-2 pr-1">
                            <span>‹</span>
                            <span>›</span>
                        </span>
                    </nav>
                </div>
            </main>

            <Terminal />
            <StatusBar />
        </div>
    )
}
